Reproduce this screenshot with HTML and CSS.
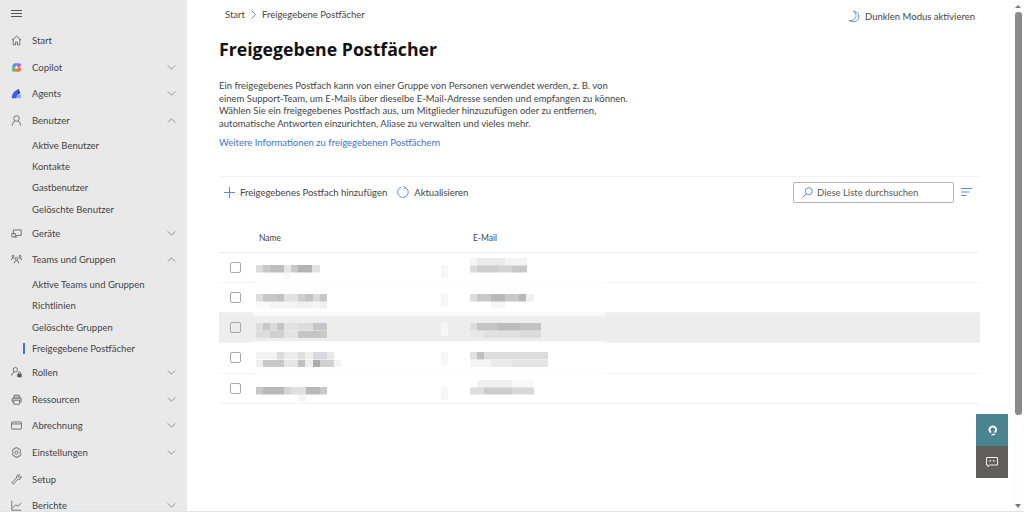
FILE: index.html
```html
<!DOCTYPE html>
<html lang="de">
<head>
    <title>Freigegebene Postfächer</title>
    <link rel="stylesheet" href="styles.css">
</head>
<body>
    <div class="app">
        <!-- Seitenleiste -->
        <nav class="sidebar">
            <div class="burger">
                <svg width="11" height="7" viewBox="0 0 11 7"><path d="M0 .5h11M0 3.500h11M0 6.500h11" class="ico"/></svg>
            </div>
            <a class="nav-item">
                <svg class="nav-icon" viewBox="0 0 14 14"><path d="M1 6.500 7 1.500l6 5M2.800 5.500v7h3V9h2.400v3.500h3v-7" class="ico"/></svg>
                <span class="nav-label">Start</span>
            </a>
            <a class="nav-item">
                <svg class="nav-icon" viewBox="0 0 14 14"><path d="M4 1.500h4L6 7H2.500Q1 7 1.500 5z" fill="#4a8fe0"/><path d="M8 1.500h2.500q2.500 0 2.500 3L10 7H6z" fill="#b565d8"/><path d="M2 7h4L4.500 12.500H4Q1 12.500 1 9.500z" fill="#63b66b"/><path d="M6 7h7q0 5.500-3 5.500H4.500z" fill="#f2793c"/><circle cx="7" cy="7" r="1.800" fill="#e9e9e9"/></svg>
                <span class="nav-label">Copilot</span>
                <svg class="chev" viewBox="0 0 10 6"><path d="m.5.500 4.500 4.500L9.500.5" class="ico-thin"/></svg>
            </a>
            <a class="nav-item">
                <svg class="nav-icon" viewBox="0 0 14 14"><path d="M1 13Q1 6 7 3l2.500-2L10 8 6.500 13z" fill="#3b5fe0"/><path d="M9.500 1 12 7H8.500z" fill="#27357f"/><circle cx="10" cy="10.500" r="2.800" fill="#8fa6f5"/></svg>
                <span class="nav-label">Agents</span>
                <svg class="chev" viewBox="0 0 10 6"><path d="m.5.500 4.500 4.500L9.500.5" class="ico-thin"/></svg>
            </a>
            <a class="nav-item">
                <svg class="nav-icon" viewBox="0 0 14 14"><circle cx="7" cy="4.500" r="3.500" class="ico"/><path d="M1.500 13.500Q2 8.500 5 8M12.500 13.500Q12 8.500 9 8" class="ico"/></svg>
                <span class="nav-label">Benutzer</span>
                <svg class="chev" viewBox="0 0 10 6"><path d="m.5 5.500 4.500-4.500 4.500 4.500" class="ico-thin"/></svg>
            </a>
            <a class="sub-item">Aktive Benutzer</a>
            <a class="sub-item">Kontakte</a>
            <a class="sub-item">Gastbenutzer</a>
            <a class="sub-item">Gelöschte Benutzer</a>
            <a class="nav-item">
                <svg class="nav-icon" viewBox="0 0 14 14"><path d="M3 8V2.500h10V9.500H6M5 11.500h3M1 7h4.500v4.500H1z" class="ico"/></svg>
                <span class="nav-label">Geräte</span>
                <svg class="chev" viewBox="0 0 10 6"><path d="m.5.500 4.500 4.500L9.500.5" class="ico-thin"/></svg>
            </a>
            <a class="nav-item">
                <svg class="nav-icon" viewBox="0 0 14 14"><circle cx="2.500" cy="3" r="1.300" class="ico"/><circle cx="11.500" cy="3" r="1.300" class="ico"/><circle cx="7" cy="6" r="1.700" class="ico"/><path d="M.5 8q0-3 2-3 1 0 1.500 1M13.500 8q0-3-2-3-1 0-1.500 1M4 12q0-3.500 3-3.500t3 3.500" class="ico"/></svg>
                <span class="nav-label">Teams und Gruppen</span>
                <svg class="chev" viewBox="0 0 10 6"><path d="m.5 5.500 4.500-4.500 4.500 4.500" class="ico-thin"/></svg>
            </a>
            <a class="sub-item">Aktive Teams und Gruppen</a>
            <a class="sub-item">Richtlinien</a>
            <a class="sub-item">Gelöschte Gruppen</a>
            <a class="sub-item current">Freigegebene Postfächer</a>
            <a class="nav-item">
                <svg class="nav-icon" viewBox="0 0 14 14"><circle cx="5.500" cy="3.500" r="2.800" class="ico"/><path d="M.8 11q.5-4 3.200-4.500" class="ico"/><path d="M8 8.500h5.500V13H8z" fill="#555"/><path d="M9.300 8.500V7q1.500-1.500 3 0v1.500" class="ico"/></svg>
                <span class="nav-label">Rollen</span>
                <svg class="chev" viewBox="0 0 10 6"><path d="m.5.500 4.500 4.500L9.500.5" class="ico-thin"/></svg>
            </a>
            <a class="nav-item">
                <svg class="nav-icon" viewBox="0 0 14 14"><path d="M4 4V1.500h6.500V4M3.500 10H1.500V6l2-2h8l1.500 2v4h-2M3.500 8h7.500v5H3.500zM1.500 6h11" class="ico"/></svg>
                <span class="nav-label">Ressourcen</span>
                <svg class="chev" viewBox="0 0 10 6"><path d="m.5.500 4.500 4.500L9.500.5" class="ico-thin"/></svg>
            </a>
            <a class="nav-item">
                <svg class="nav-icon" viewBox="0 0 14 14"><rect x=".5" y="2.500" width="13" height="9" rx="1" class="ico"/><path d="M.5 5h13" class="ico"/></svg>
                <span class="nav-label">Abrechnung</span>
                <svg class="chev" viewBox="0 0 10 6"><path d="m.5.500 4.500 4.500L9.500.5" class="ico-thin"/></svg>
            </a>
            <a class="nav-item">
                <svg class="nav-icon" viewBox="0 0 14 14"><circle cx="7" cy="7" r="2" class="ico"/><path d="M5.500 1h3l.5 1.800 1.800-.5 1.500 2.600L11.500 7l1.300 2.100-1.500 2.600-1.800-.5-.5 1.800h-3L5 11.200l-1.800.5-1.500-2.600L3 7 1.700 4.900l1.500-2.600 1.800.5z" class="ico"/></svg>
                <span class="nav-label">Einstellungen</span>
                <svg class="chev" viewBox="0 0 10 6"><path d="m.5.500 4.500 4.500L9.500.5" class="ico-thin"/></svg>
            </a>
            <a class="nav-item">
                <svg class="nav-icon" viewBox="0 0 14 14"><path d="M1 11 7 5Q6.500 2 9 1l2 .2L9 3.500l1.500 1.500L13 3q0 3-2 3.800-1.500.5-2.500 0L3 13z" class="ico"/></svg>
                <span class="nav-label">Setup</span>
            </a>
            <a class="nav-item">
                <svg class="nav-icon" viewBox="0 0 14 14"><path d="M1 1v12h12M2.500 10 6 6l2.500 2L13 4" class="ico"/></svg>
                <span class="nav-label">Berichte</span>
                <svg class="chev" viewBox="0 0 10 6"><path d="m.5.500 4.500 4.500L9.500.5" class="ico-thin"/></svg>
            </a>
        </nav>

        <!-- Hauptbereich -->
        <main class="content">
            <div class="topbar">
                <div class="crumbs">
                    <span>Start</span>
                    <svg width="5" height="9" viewBox="0 0 5 9"><path d="m.5.500 4 4-4 4" class="ico-thin"/></svg>
                    <span>Freigegebene Postfächer</span>
                </div>
                <div class="dark-toggle">
                    <svg width="12" height="13" viewBox="0 0 13 13"><path d="M5.500.8Q8.500 1.500 8.800 5 9 9 4.500 10.800 2.500 11.200 1 10.500 3.500 13 7.500 12 12 10.500 11.800 6 11.500 1.500 5.500.8z" class="ico-blue"/></svg>
                    <span>Dunklen Modus aktivieren</span>
                </div>
            </div>
            <h1 class="page-title">Freigegebene Postfächer</h1>
            <p class="intro">Ein freigegebenes Postfach kann von einer Gruppe von Personen verwendet werden, z. B. von<br>einem Support-Team, um E-Mails über dieselbe E-Mail-Adresse senden und empfangen zu können.<br>Wählen Sie ein freigegebenes Postfach aus, um Mitglieder hinzuzufügen oder zu entfernen,<br>automatische Antworten einzurichten, Aliase zu verwalten und vieles mehr.</p>
            <a class="more-link">Weitere Informationen zu freigegebenen Postfächern</a>

            <div class="toolbar">
                <button class="tool-btn">
                    <svg width="11" height="11" viewBox="0 0 11 11"><path d="M5.500 0v11M0 5.500h11" class="ico-blue"/></svg>
                    Freigegebenes Postfach hinzufügen
                </button>
                <button class="tool-btn">
                    <svg width="12" height="12" viewBox="0 0 12 12"><path d="M4 1.200A5.300 5.300 0 1 0 8.500 1.500M6.500 .3 8.600 1.500 7.300 3.300" class="ico-blue"/></svg>
                    Aktualisieren
                </button>
                <div class="search-box">
                    <svg width="11" height="11" viewBox="0 0 11 11"><circle cx="6.800" cy="4.200" r="3.500" class="ico-blue"/><path d="M4.300 6.700 .5 10.500" class="ico-blue"/></svg>
                    <span>Diese Liste durchsuchen</span>
                </div>
                <svg class="filter-icon" width="11" height="8" viewBox="0 0 11 8"><path d="M0 .5h11M0 4h8.500M0 7.500h5.500" class="ico-blue"/></svg>
            </div>

            <div class="mail-table">
                <div class="mail-head">
                    <span class="col-name">Name</span>
                    <span class="col-mail">E-Mail</span>
                </div>
                <div class="mail-row r1">
                    <span class="check"></span>
                    <span class="col-name"><i class="mosaic n1"></i></span>
                    <i class="speck"></i>
                    <span class="col-mail"><i class="mosaic e1"></i></span>
                </div>
                <div class="mail-row r2">
                    <span class="check"></span>
                    <span class="col-name"><i class="mosaic n2"></i></span>
                    <i class="speck"></i>
                    <span class="col-mail"><i class="mosaic e2"></i></span>
                </div>
                <div class="mail-row r3 selected">
                    <span class="check"></span>
                    <span class="col-name"><i class="mosaic n3"></i></span>
                    <i class="speck"></i>
                    <span class="col-mail"><i class="mosaic e3"></i></span>
                </div>
                <div class="mail-row r4">
                    <span class="check"></span>
                    <span class="col-name"><i class="mosaic n4"></i></span>
                    <i class="speck"></i>
                    <span class="col-mail"><i class="mosaic e4"></i></span>
                </div>
                <div class="mail-row r5">
                    <span class="check"></span>
                    <span class="col-name"><i class="mosaic n5"></i></span>
                    <i class="speck"></i>
                    <span class="col-mail"><i class="mosaic e5"></i></span>
                </div>
            </div>
        </main>

        <div class="scrollbar">
            <span class="arrow-up"></span>
            <span class="thumb"></span>
            <span class="arrow-down"></span>
        </div>

        <!-- schwebende Hilfe-Buttons -->
        <div class="float-btns">
            <div class="float-btn help">
                <svg width="9" height="12" viewBox="0 0 9 12"><path d="M3 8.500A3.300 3.300 0 1 1 6.500 8.500" stroke="#fff" stroke-width="2" fill="none"/><path d="M3.500 10.500h3.500" stroke="#fff" stroke-width="1.500"/></svg>
            </div>
            <div class="float-btn chat">
                <svg width="12" height="12" viewBox="0 0 12 12"><path d="M.5 1.500h11v7.500H3.500L2 10.800V9H.5z" stroke="#eee" fill="none"/><path d="M3.500 4h1.500v1.500H3.500zM7 4h1.500v1.500H7z" fill="#eee"/></svg>
            </div>
        </div>
    </div>
</body>
</html>
```

FILE: styles.css
```css
* {
    box-sizing: border-box;
}

html, body {
    margin: 0;
    height: 100%;
    overflow: hidden;
}

body {
    background: #fff;
    color: #444;
    font-family: Lato, "Open Sans", "Liberation Sans", sans-serif;
    font-size: 9.5px;
}

.app {
    position: relative;
    display: flex;
    height: 512px;
    border-bottom: 1px solid #e4e4e4;
    overflow: hidden;
}

/* icon strokes */
.ico {
    fill: none;
    stroke: #555;
    stroke-width: 1;
}

.ico-thin {
    fill: none;
    stroke: #666;
    stroke-width: 0.8;
}

.ico-blue {
    fill: none;
    stroke: #5c8ed8;
    stroke-width: 1;
}

/* sidebar */
.sidebar {
    flex: 0 0 187px;
    background: #e9e9e9;
    padding: 10px 0 0 11px;
    overflow: hidden;
}

.burger {
    height: 17.4px;
}

.burger svg {
    display: block;
}

.nav-item {
    display: flex;
    align-items: center;
    height: 26.6px;
    padding-right: 11px;
}

.nav-icon {
    flex: none;
    width: 11px;
    height: 11px;
    margin-right: 10px;
}

.nav-label {
    flex: 1;
}

.chev {
    width: 9px;
    height: 5px;
}

.sub-item {
    display: block;
    height: 21.3px;
    line-height: 21.3px;
    padding-left: 21px;
    position: relative;
}

.nav-item + .sub-item {
    margin-top: 1px;
}

.sub-item.current::before {
    content: "";
    position: absolute;
    left: 12px;
    top: 5px;
    width: 2px;
    height: 11px;
    background: #3f74d8;
}

/* content */
.content {
    flex: 1;
    min-width: 0;
    padding: 0 44px 0 32px;
}

.topbar {
    display: flex;
    justify-content: space-between;
    align-items: center;
    height: 29px;
    padding-left: 6px;
}

.crumbs {
    display: flex;
    align-items: center;
    gap: 6px;
}

.dark-toggle {
    display: flex;
    align-items: center;
    gap: 5px;
    margin-right: 5px;
    padding-top: 3px;
}

.page-title {
    margin: 7px 0 0;
    color: #111;
    font-family: "Open Sans", sans-serif;
    font-size: 17.7px;
    font-weight: 700;
    line-height: 27px;
}

.intro {
    margin: 17px 0 0;
    line-height: 12.6px;
}

.more-link {
    display: block;
    margin-top: 6px;
    line-height: 13px;
    color: #3f74c8;
}

.toolbar {
    display: flex;
    align-items: center;
    height: 31px;
    margin-top: 27px;
    padding-left: 5px;
    border-top: 1px solid #f3f3f3;
}

.tool-btn {
    display: flex;
    align-items: center;
    gap: 5px;
    padding: 0;
    margin-right: 10px;
    border: 0;
    background: none;
    color: inherit;
    font: inherit;
}

.search-box {
    display: flex;
    align-items: center;
    gap: 4px;
    width: 161px;
    height: 21px;
    margin-left: auto;
    padding-left: 8px;
    border: 1px solid #b4b4b4;
    border-radius: 2px;
    color: #555;
}

.filter-icon {
    margin: 0 8px 0 7px;
}

.mail-table {
    margin-top: 16px;
}

.mail-head {
    position: relative;
    height: 29.4px;
    line-height: 30px;
    border-bottom: 1px solid #eee;
    font-size: 8.5px;
}

.mail-row {
    position: relative;
    height: 30.2px;
    border-bottom: 1px solid #f2f2f2;
}

.r1 { --band: 12px; }
.r2 { --band: 11px; }
.r3 { --band: 10px; }
.r4 { --band: 9px; }
.r5 { --band: 13px; }

.mail-row.selected {
    background: #ededed;
}

/* der verwischte Streifen ueber den Zeilenlinien */
.mail-row + .mail-row::before {
    content: "";
    position: absolute;
    left: 34px;
    top: -2px;
    width: 352px;
    height: 3px;
    background: rgba(255, 255, 255, 0.7);
}

.mail-row.selected::before {
    top: -4px;
    height: 7px;
    background: rgba(255, 255, 255, 0.6);
}

.col-name {
    position: absolute;
    left: 40px;
    top: 0;
}

.col-mail {
    position: absolute;
    left: 254px;
    top: 0;
}

.check {
    position: absolute;
    left: 11px;
    top: 9px;
    width: 11px;
    height: 11px;
    border: 1px solid #a8a8a8;
    border-radius: 2px;
    background: #fff;
}

.selected .check {
    background: #ededed;
}

.speck {
    position: absolute;
    left: 222px;
    top: var(--band);
    width: 7px;
    height: 13px;
    background: #f6f6f6;
}

/* verpixelte Namen und Adressen */
.mosaic {
    position: absolute;
    top: var(--band);
    left: -3px;
    display: block;
    height: 15px;
    filter: blur(0.6px);
    background-repeat: no-repeat;
    background-size: 100% 7.5px;
    background-position: 0 0, 0 7.5px;
}

.n1 {
    width: 64px;
    background-image:
        linear-gradient(90deg, #dcdcdc 0 7px, #c8c8c8 7px 14px, #bdbdbd 14px 28px, #e6e6e6 28px 35px, #c8c8c8 35px 42px, #b4b4b4 42px 56px, #e2e2e2 56px 64px),
        linear-gradient(90deg, #fff 0 28px, #f7f7f7 28px 35px, #fff 35px);
}

.n2 {
    width: 71px;
    background-image:
        linear-gradient(90deg, #ddd 0 7px, #c6c6c6 7px 21px, #c0c0c0 21px 28px, #e2e2e2 28px 42px, #d0d0d0 42px 49px, #c2c2c2 49px 57px, #dadada 57px 64px, #c8c8c8 64px 71px),
        linear-gradient(90deg, #f9f9f9 0 14px, #f3f3f3 14px 42px, #efefef 42px 57px, #f5f5f5 57px 64px, #eee 64px 71px);
}

.n3 {
    width: 71px;
    background-image:
        linear-gradient(90deg, #ddd 0 7px, #c8c8c8 7px 14px, #d9d9d9 14px 21px, #c4c4c4 21px 28px, #e2e2e2 28px 42px, #dcdcdc 42px 57px, #c2c6cc 57px 71px),
        linear-gradient(90deg, #ddd 0 14px, #d0d0d0 14px 28px, #e2e2e2 28px 42px, #c4c4c4 42px 64px, #c8c8c8 64px 71px);
}

.n4 {
    width: 85px;
    background-image:
        linear-gradient(90deg, #f2f2f2 0 21px, #dcdcdc 21px 28px, #ececec 28px 42px, #dedede 42px 49px, #eee 49px 57px, #d6dade 57px 71px, #e8e8e8 71px 78px, #fff 78px),
        linear-gradient(90deg, #eee 0 7px, #c8c8c8 7px 28px, #e6e6e6 28px 42px, #c0c0c0 42px 49px, #eee 49px 57px, #acacac 57px 64px, #d0d0d0 64px 78px, #f4f4f4 78px 85px);
}

.n5 {
    width: 71px;
    background-image:
        linear-gradient(90deg, #c8c8c8 0 7px, #b8b8b8 7px 28px, #d4d4d4 28px 35px, #e0e0e0 35px 50px, #b8b8b8 50px 64px, #c8c8c8 64px 71px),
        linear-gradient(90deg, #fff 0 42px, #f5f5f5 42px 50px, #fff 50px);
}

.e1 {
    top: 5px;
    width: 57px;
    background-image:
        linear-gradient(90deg, #f5f5f5 0 7px, #eaeaea 7px 35px, #f3f3f3 35px 57px),
        linear-gradient(90deg, #dadada 0 7px, #ccc 7px 28px, #d4d4d4 28px 42px, #c8c8c8 42px 57px);
}

.e2 {
    width: 64px;
    background-image:
        linear-gradient(90deg, #ddd 0 7px, #c8c8c8 7px 21px, #b8b8b8 21px 35px, #c8c8c8 35px 49px, #b8b8b8 49px 56px, #f0f0f0 56px 64px),
        linear-gradient(90deg, #fff 0 21px, #f6f6f6 21px 35px, #fff 35px);
}

.e3 {
    width: 71px;
    background-image:
        linear-gradient(90deg, #ddd 0 7px, #c4c4c4 7px 28px, #bcbcbc 28px 50px, #c4c0be 50px 71px),
        linear-gradient(90deg, #e8e8e8 0 14px, #e0e0e0 14px 50px, #dcdcdc 50px 71px);
}

.e4 {
    width: 78px;
    background-image:
        linear-gradient(90deg, #e0e0e0 0 7px, #c0c0c0 7px 14px, #dcdcdc 14px 78px),
        linear-gradient(90deg, #f4f4f4 0 21px, #eaeaea 21px 42px, #e4e4e4 42px 78px);
}

.e5 {
    top: 6px;
    width: 64px;
    background-image:
        linear-gradient(90deg, #fff 0 7px, #f0f0f0 7px 42px, #f8f8f8 42px 64px),
        linear-gradient(90deg, #ddd 0 14px, #ccc 14px 42px, #d8d8d8 42px 64px);
}

/* scrollbar */
.scrollbar {
    position: absolute;
    right: 1px;
    top: 0;
    bottom: 0;
    width: 10px;
    display: flex;
    flex-direction: column;
    align-items: center;
    background: #fdfdfd;
}

.arrow-up,
.arrow-down {
    flex: none;
    width: 0;
    height: 0;
    border-left: 3px solid transparent;
    border-right: 3px solid transparent;
}

.arrow-up {
    margin-top: 5px;
    border-bottom: 3px solid #777;
}

.arrow-down {
    margin-top: 89px;
    border-top: 4px solid #777;
}

.thumb {
    flex: none;
    width: 7px;
    height: 403px;
    margin-top: 4px;
    border-radius: 3px;
    background: #8a8a8a;
}

/* floating buttons */
.float-btns {
    position: absolute;
    left: 976px;
    top: 414px;
    width: 32px;
}

.float-btn {
    display: flex;
    align-items: center;
    justify-content: center;
    height: 32px;
}

.float-btn.help {
    background: #4a848f;
}

.float-btn.chat {
    background: #605e5c;
}
```
